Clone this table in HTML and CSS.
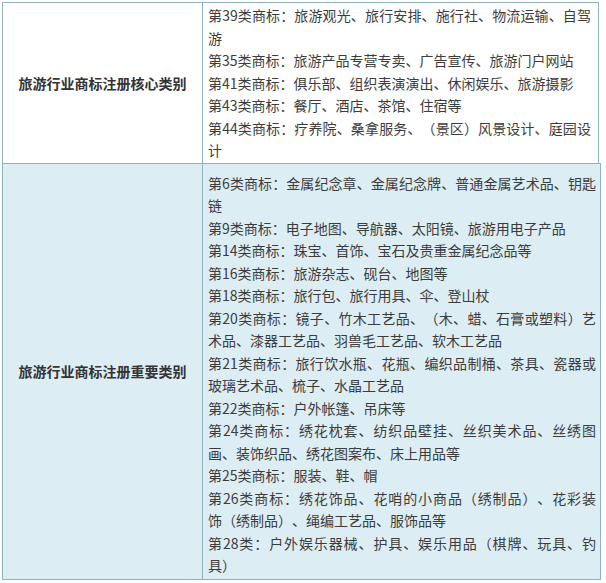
FILE: index.html
```html
<!DOCTYPE html>
<html lang="zh">
<head>
<meta charset="utf-8">
<link rel="stylesheet" href="styles.css">
</head>
<body>
<div class="table">
  <div class="row row-core">
    <div class="label">旅游行业商标注册核心类别</div>
    <div class="items">
      <div>第39类商标：旅游观光、旅行安排、施行社、物流运输、自驾游</div>
      <div>第35类商标：旅游产品专营专卖、广告宣传、旅游门户网站</div>
      <div>第41类商标：俱乐部、组织表演演出、休闲娱乐、旅游摄影</div>
      <div>第43类商标：餐厅、酒店、茶馆、住宿等</div>
      <div>第44类商标：疗养院、桑拿服务、（景区）风景设计、庭园设计</div>
    </div>
  </div>
  <div class="row row-main">
    <div class="label">旅游行业商标注册重要类别</div>
    <div class="items">
      <div>第6类商标：金属纪念章、金属纪念牌、普通金属艺术品、钥匙链</div>
      <div>第9类商标：电子地图、导航器、太阳镜、旅游用电子产品</div>
      <div>第14类商标：珠宝、首饰、宝石及贵重金属纪念品等</div>
      <div>第16类商标：旅游杂志、砚台、地图等</div>
      <div>第18类商标：旅行包、旅行用具、伞、登山杖</div>
      <div>第20类商标：镜子、竹木工艺品、（木、蜡、石膏或塑料）艺术品、漆器工艺品、羽兽毛工艺品、软木工艺品</div>
      <div>第21类商标：旅行饮水瓶、花瓶、编织品制桶、茶具、瓷器或玻璃艺术品、梳子、水晶工艺品</div>
      <div>第22类商标：户外帐篷、吊床等</div>
      <div>第24类商标：绣花枕套、纺织品壁挂、丝织美术品、丝绣图画、装饰织品、绣花图案布、床上用品等</div>
      <div>第25类商标：服装、鞋、帽</div>
      <div><span class="line-full">第26类商标：绣花饰品、花哨的小商品（绣制品）、花彩装</span>饰（绣制品）、绳编工艺品、服饰品等</div>
      <div>第28类：户外娱乐器械、护具、娱乐用品（棋牌、玩具、钓具）</div>
    </div>
  </div>
</div>
</body>
</html>
```

FILE: styles.css
```css
html, body {
  margin: 0;
  padding: 0;
  background: #ffffff;
}
body {
  padding: 2px 0 0 2px;
  font-family: "Noto Sans CJK SC", "Noto Sans", sans-serif;
  font-size: 14px;
  line-height: 22.5px;
  color: #3c3c3c;
  text-spacing-trim: space-all;
}
.table {
  width: 599px;
}
.row {
  display: flex;
  border: 1px solid #8fb2bf;
}
.row-core {
  width: 595px;
  background: #ffffff;
  border-bottom: none;
}
.row-main {
  width: 597px;
  background: #dcedf3;
}
.label {
  width: 199px;
  flex: none;
  display: flex;
  align-items: center;
  justify-content: center;
  font-weight: bold;
  color: #333;
  border-right: 1px solid #8fb2bf;
}
.items {
  flex: 1;
  padding: 1px 7px 1px 5px;
  text-align: justify;
}
.row-main .items {
  padding: 8px 4px 2px 5px;
}
.line-full {
  display: block;
  text-align-last: justify;
}
```
